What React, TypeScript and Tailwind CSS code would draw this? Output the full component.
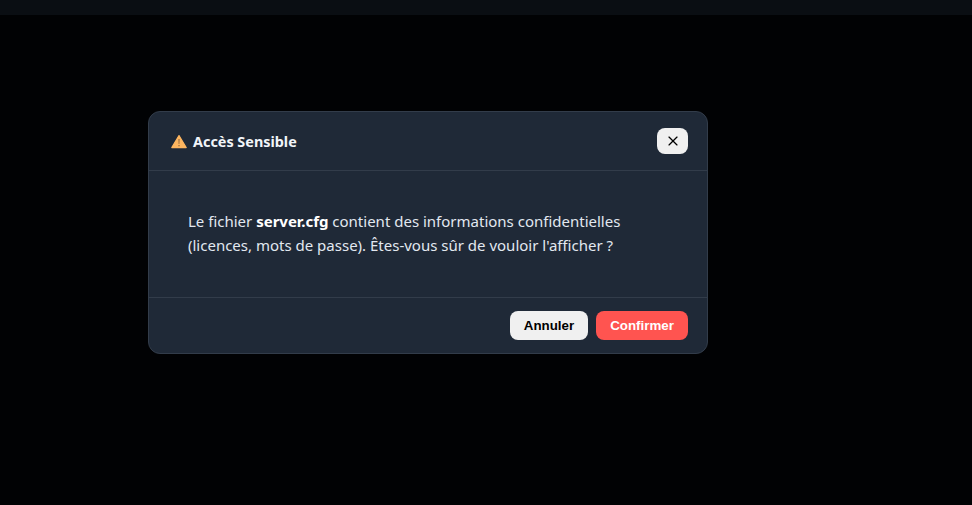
import { X } from "lucide-react";

export default function App() {
  return (
    <div className="w-[972px] h-[505px] bg-[#010204] overflow-hidden flex flex-col font-['Noto_Sans',sans-serif]">
      <div className="h-[15px] bg-[#0a0e13] shrink-0" />
      <div className="pl-[148px] pt-[96px]">
        <div className="w-[560px] h-[243px] bg-[#1f2937] border border-[#323c4a] rounded-xl flex flex-col">
          <div className="h-[59px] flex items-center justify-between pl-[22px] pr-[19px] border-b border-[#323c4a] shrink-0">
            <div className="flex items-center gap-[6px] pt-px text-[#f1f5f9] text-[14.4px] font-bold">
              <svg width="16" height="15" viewBox="0 0 16 15">
                <path fill="#fdb55f" stroke="#fdb55f" strokeLinejoin="round" strokeWidth="1.2" d="M8 1.6 L15.2 13.6 H.8 Z" />
                <path fill="#7a5a3a" d="M7.5 5h1l-.2 5h-.6zM7.5 11h1v1.2h-1z" />
              </svg>
              <span>Accès Sensible</span>
            </div>
            <button className="w-[31px] h-[26px] bg-[#f0f0f0] rounded-lg flex items-center justify-center text-black">
              <X size={16} strokeWidth={1.75} />
            </button>
          </div>
          <div className="flex-1 px-[39px] pt-[38px] text-[15px] leading-[24px] text-[#e2e8f0]">
            Le fichier <strong className="text-white font-bold">server.cfg</strong> contient des informations confidentielles (licences, mots de passe). Êtes-vous sûr de vouloir l'afficher ?
          </div>
          <div className="h-[56px] border-t border-[#323c4a] flex items-center justify-end gap-2 pr-[19px] shrink-0">
            <button className="w-[78px] h-[29px] rounded-lg bg-[#f0f0f0] text-black text-[13.33px] font-bold font-['Liberation_Sans',sans-serif]">Annuler</button>
            <button className="w-[92px] h-[29px] rounded-lg bg-[#ff5450] text-white text-[13.33px] font-bold font-['Liberation_Sans',sans-serif]">Confirmer</button>
          </div>
        </div>
      </div>
    </div>
  );
}
